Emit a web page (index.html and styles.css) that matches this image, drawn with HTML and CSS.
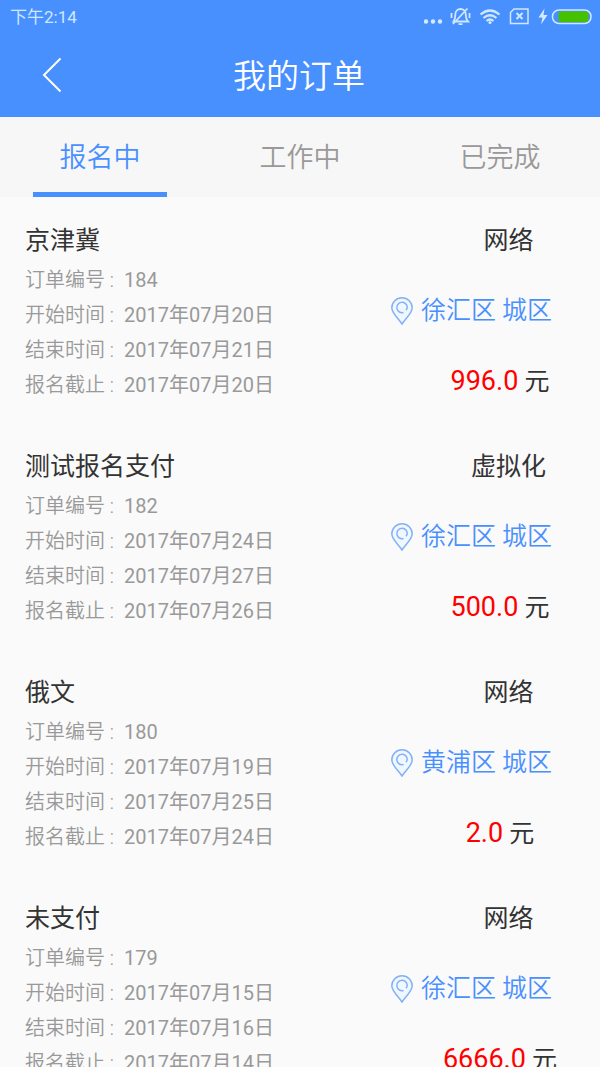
FILE: index.html
```
<!DOCTYPE html>
<html lang="zh-CN">
<head>
    <meta charset="UTF-8">
    <meta name="viewport" content="width=device-width, initial-scale=1.0">
    <title>我的订单</title>
    <link rel="stylesheet" href="styles.css">
</head>
<body>
    <svg class="sprite" aria-hidden="true">
        <symbol id="pin" viewBox="0 0 22 28">
            <path d="M11 27C8 22 .8 16.500 .8 10.800a10.200 10 0 0 1 20.400 0C21.200 16.500 14 22 11 27z" fill="#f0f8ff" stroke="#84b0f8" stroke-width="1.500"/>
            <path d="M12.500 15.500a5.200 5.200 0 1 1 3.700-5.500c.1 1.500-.5 2.500-1.200 3.200" fill="none" stroke="#84b0f8" stroke-width="1.500"/>
        </symbol>
    </svg>

    <div class="status-bar">
        <span class="time">下午2:14</span>
        <svg class="status-icons" width="168" height="20" viewBox="424 7 168 20" fill="none" stroke="#cfe7ff" stroke-width="1.500" aria-hidden="true">
            <!-- more -->
            <g fill="#d4ebff" stroke="none">
                <circle cx="426" cy="21.500" r="2.200"/>
                <circle cx="433" cy="21.500" r="2.200"/>
                <circle cx="440" cy="21.500" r="2.200"/>
            </g>
            <!-- muted bell -->
            <path d="M453.500 21.500h14.500c-2-2-2.200-3.500-2.200-6.500 0-8-10.500-8-10.500 0 0 3-.2 4.500-1.800 6.500zM458.500 24.200h4M451.500 13v5M469.500 13v5M453 24L467.500 8.500" stroke-width="1.800"/>
            <!-- wifi -->
            <path d="M480.500 14.500q9.500-8 19 0M483.500 18q6.500-5.500 13 0M486.500 21q3.500-3 7 0" stroke-width="2.200"/>
            <circle cx="490" cy="22.500" r="1.500" fill="#d4ebff" stroke="none"/>
            <!-- no sim -->
            <path d="M514 9h14v14.500h-17.500V12.500z"/>
            <path d="M516.500 13l6 6M522.500 13l-6 6" stroke-width="2"/>
            <!-- battery -->
            <path d="M544.500 8.500l-6 9h4l-1.500 7 6.500-9.500h-4z" fill="#d4ebff" stroke="none"/>
            <rect x="552.500" y="10" width="38.500" height="13.500" rx="6.500"/>
            <rect x="558.500" y="11.500" width="30" height="10.500" rx="3" fill="#45c100" stroke="none"/>
        </svg>
    </div>

    <header class="nav-bar">
        <button class="back" type="button" aria-label="返回">
            <svg width="20" height="36" viewBox="0 0 20 36" fill="none" stroke="#fff" stroke-width="2"><path d="M18.500 1.500L2 18l16.500 16.500"/></svg>
        </button>
        <h1>我的订单</h1>
    </header>

    <nav class="tabs">
        <button class="tab active" type="button">报名中</button>
        <button class="tab" type="button">工作中</button>
        <button class="tab" type="button">已完成</button>
    </nav>

    <main class="orders">
        <article class="order">
            <div class="info">
                <h2>京津冀</h2>
                <dl>
                    <div><dt>订单编号 :</dt><dd>184</dd></div>
                    <div><dt>开始时间 :</dt><dd>2017年07月20日</dd></div>
                    <div><dt>结束时间 :</dt><dd>2017年07月21日</dd></div>
                    <div><dt>报名截止 :</dt><dd>2017年07月20日</dd></div>
                </dl>
            </div>
            <div class="side">
                <p class="type">网络</p>
                <p class="address"><svg class="pin"><use href="#pin"/></svg>徐汇区 城区</p>
                <p class="price"><span>996.0</span> 元</p>
            </div>
        </article>

        <article class="order">
            <div class="info">
                <h2>测试报名支付</h2>
                <dl>
                    <div><dt>订单编号 :</dt><dd>182</dd></div>
                    <div><dt>开始时间 :</dt><dd>2017年07月24日</dd></div>
                    <div><dt>结束时间 :</dt><dd>2017年07月27日</dd></div>
                    <div><dt>报名截止 :</dt><dd>2017年07月26日</dd></div>
                </dl>
            </div>
            <div class="side">
                <p class="type">虚拟化</p>
                <p class="address"><svg class="pin"><use href="#pin"/></svg>徐汇区 城区</p>
                <p class="price"><span>500.0</span> 元</p>
            </div>
        </article>

        <article class="order">
            <div class="info">
                <h2>俄文</h2>
                <dl>
                    <div><dt>订单编号 :</dt><dd>180</dd></div>
                    <div><dt>开始时间 :</dt><dd>2017年07月19日</dd></div>
                    <div><dt>结束时间 :</dt><dd>2017年07月25日</dd></div>
                    <div><dt>报名截止 :</dt><dd>2017年07月24日</dd></div>
                </dl>
            </div>
            <div class="side">
                <p class="type">网络</p>
                <p class="address"><svg class="pin"><use href="#pin"/></svg>黄浦区 城区</p>
                <p class="price"><span>2.0</span> 元</p>
            </div>
        </article>

        <article class="order">
            <div class="info">
                <h2>未支付</h2>
                <dl>
                    <div><dt>订单编号 :</dt><dd>179</dd></div>
                    <div><dt>开始时间 :</dt><dd>2017年07月15日</dd></div>
                    <div><dt>结束时间 :</dt><dd>2017年07月16日</dd></div>
                    <div><dt>报名截止 :</dt><dd>2017年07月14日</dd></div>
                </dl>
            </div>
            <div class="side">
                <p class="type">网络</p>
                <p class="address"><svg class="pin"><use href="#pin"/></svg>徐汇区 城区</p>
                <p class="price"><span>6666.0</span> 元</p>
            </div>
        </article>
    </main>
</body>
</html>
```

FILE: styles.css
```
* {
    box-sizing: border-box;
    margin: 0;
    padding: 0;
}
body {
    display: flex;
    flex-direction: column;
    height: 100vh;
    overflow: hidden;
    font-family: Roboto, "Noto Sans CJK SC", sans-serif;
    background: #fafafa;
    color: #333;
}
button {
    border: none;
    background: none;
    font-family: inherit;
    cursor: pointer;
}
.sprite {
    display: none;
}

/* top */
.status-bar {
    display: flex;
    justify-content: space-between;
    align-items: center;
    flex: none;
    height: 34px;
    padding: 0 8px 0 10px;
    background: #4990ff;
}
.time {
    font-size: 17px;
    line-height: 34px;
    color: #cfe7ff;
}
.nav-bar {
    display: grid;
    grid-template-columns: 60px 1fr 60px;
    align-items: center;
    flex: none;
    height: 83px;
    padding: 0 24px 0 22px;
    background: #4990ff;
}
.back {
    display: flex;
    justify-content: center;
    padding: 7px 0 9px;
}
.nav-bar h1 {
    padding-top: 3px;
    font-size: 33px;
    font-weight: 350;
    line-height: 80px;
    text-align: center;
    color: #fff;
}

/* tabs */
.tabs {
    display: flex;
    justify-content: space-around;
    flex: none;
    height: 80px;
    background: #f7f7f7;
}
.tab {
    width: 134px;
    padding-top: 8px;
    border-bottom: 5px solid transparent;
    font-size: 27px;
    font-weight: 350;
    line-height: 67px;
    color: #999;
}
.tab.active {
    border-color: #4990ff;
    color: #4990ff;
}

/* list */
.orders {
    flex: 1;
    overflow-y: auto;
    scrollbar-width: none;
}
.order {
    display: flex;
    justify-content: space-between;
    padding: 26px 0 20px 25px;
}
.info h2 {
    margin-bottom: 4px;
    font-size: 25px;
    font-weight: 400;
    line-height: 36px;
}
.info dl div {
    display: flex;
    gap: 10px;
    font-size: 20px;
    line-height: 35px;
    color: #999;
}
.info dt {
    font-weight: 350;
}
.side {
    display: flex;
    flex-direction: column;
    gap: 34px;
    flex: 0 0 209px;
    font-size: 25px;
    line-height: 36px;
}
.type {
    padding-left: 26px;
    text-align: center;
}
.address {
    display: flex;
    align-items: center;
    gap: 8px;
    font-weight: 350;
    color: #4990ff;
}
.pin {
    width: 22px;
    height: 28px;
}
.price {
    padding-left: 9px;
    text-align: center;
}
.price span {
    font-size: 27px;
    color: #f00;
}
```
